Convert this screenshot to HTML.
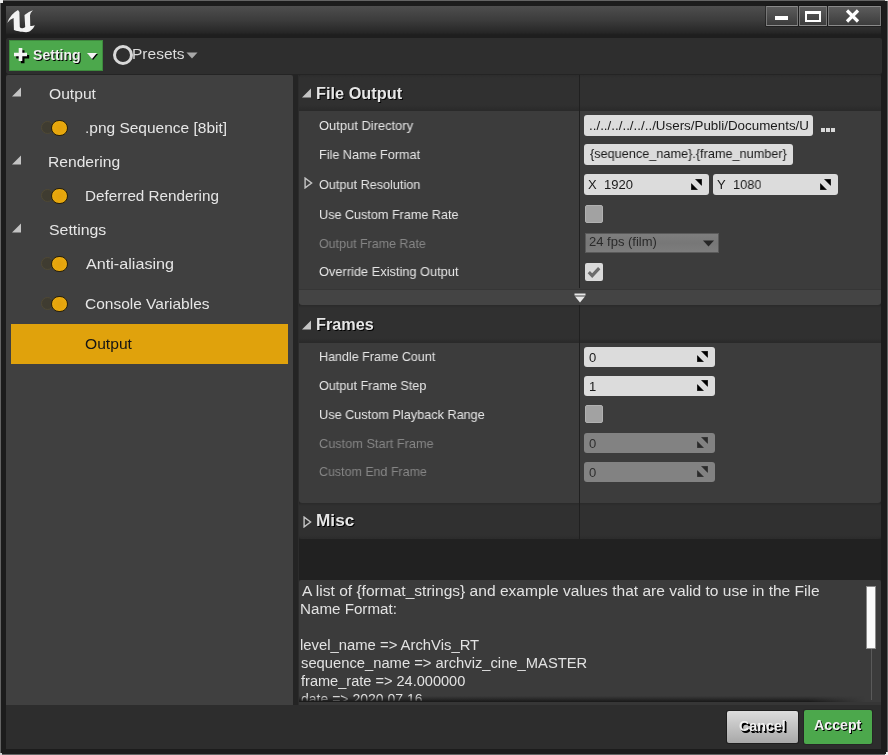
<!DOCTYPE html>
<html><head><meta charset="utf-8">
<style>
*{margin:0;padding:0;box-sizing:border-box}
html,body{width:888px;height:755px;overflow:hidden;background:#1c1c1c}
body{position:relative;font-family:"Liberation Sans",sans-serif}
.a{position:absolute}
.t{position:absolute;white-space:pre;line-height:1;will-change:transform}
</style></head><body>
<div class="a" style="left:0px;top:0px;width:888px;height:1px;background:#646464;"></div>
<div class="a" style="left:0px;top:0px;width:1px;height:755px;background:#646464;"></div>
<div class="a" style="left:887px;top:0px;width:1px;height:755px;background:#646464;"></div>
<div class="a" style="left:0px;top:754px;width:888px;height:1px;background:#646464;"></div>
<div class="a" style="left:0px;top:0px;width:3px;height:2.5px;background:#f0f0f0;"></div>
<div class="a" style="left:0px;top:0px;width:1px;height:3px;background:#f0f0f0;"></div>
<div class="a" style="left:885px;top:0px;width:3px;height:1.2px;background:#e8e8e8;"></div>
<div class="a" style="left:886px;top:752px;width:2px;height:3px;background:#f0f0f0;"></div>
<div class="a" style="left:885px;top:753.5px;width:3px;height:1.5px;background:#f0f0f0;"></div>
<div class="a" style="left:0px;top:753px;width:2px;height:2px;background:#d0d0d0;"></div>
<div class="a" style="left:6px;top:6px;width:875px;height:31.5px;background:linear-gradient(#4e4e4e 0%,#3c3c3c 44%,#272727 82%,#1e1e1e 90%,#1e1e1e 100%);"></div>
<svg class="a" style="left:4px;top:6px" width="36" height="30" viewBox="0 0 36 30"><path fill="#f2f2f2" d="M3.2 17.1 Q6 8.5 14 4.1 L15.4 6.1 L15.8 21 Q16.5 22.4 18.5 22.2 Q20.5 22 21.2 21 L20.5 8.9 Q24 6 28.9 4.3 Q26 7 26 9.6 L26.3 19.9 Q28.5 20.2 30.8 19.2 C29 23.5 25.5 26.3 22 26.2 C17 26.1 12 24.8 9.9 24 L9.6 12 Q6 13 3.2 17.1 Z"/></svg>
<div class="a" style="left:766px;top:6px;width:32px;height:20px;border:1px solid #777;border-top-color:#8a8a8a;border-bottom-color:#8a8a8a;background:linear-gradient(#5c5c5c,#3c3c3c);box-shadow:0 0 0 0.5px #111"></div>
<div class="a" style="left:775px;top:16px;width:13px;height:4px;background:#fff;"></div>
<div class="a" style="left:799px;top:6px;width:28px;height:20px;border:1px solid #777;border-top-color:#8a8a8a;border-bottom-color:#8a8a8a;background:linear-gradient(#5c5c5c,#3c3c3c);box-shadow:0 0 0 0.5px #111"></div>
<div class="a" style="left:805.3px;top:11px;width:15.7px;height:10.5px;border:2.4px solid #fff;border-top-width:3px;border-bottom-width:2px"></div>
<div class="a" style="left:828px;top:6px;width:52.5px;height:20px;border:1px solid #777;border-top-color:#8a8a8a;border-bottom-color:#8a8a8a;background:linear-gradient(#5c5c5c,#3c3c3c);box-shadow:0 0 0 0.5px #111"></div>
<svg class="a" style="left:845px;top:9px" width="15" height="14" viewBox="0 0 15 14"><path d="M2 1.5 L13 12.5 M13 1.5 L2 12.5" stroke="#fff" stroke-width="3.2"/></svg>
<div class="a" style="left:6px;top:37.5px;width:875.5px;height:36.5px;background:#2e2e2e;border-radius:2px"></div>
<div class="a" style="left:6px;top:74px;width:875px;height:1px;background:#242424;"></div>
<div class="a" style="left:9px;top:39.5px;width:94px;height:31.5px;background:#4ca84c;border:1px solid #3d8a3d"></div>
<svg class="a" style="left:13px;top:47px" width="17" height="17" viewBox="0 0 17 17"><path d="M8.5 2V15M2 8.5H15" stroke="#000" stroke-width="3.6" transform="translate(1.2,1.2)"/><path d="M7.5 1V14M1 7.5H14" stroke="#f4f4f4" stroke-width="3.6"/></svg>
<div class="t" style="left:33.20px;top:48.00px;font-size:14px;font-weight:700;color:#f0f0f0;transform:scaleX(1.0043);transform-origin:0 0;text-shadow:1px 1px 0 #000">Setting</div>
<svg class="a" style="left:86px;top:52px" width="13" height="9" viewBox="0 0 13 9"><path d="M2 2H12L7 8Z" fill="#000"/><path d="M1 1H11L6 7Z" fill="#f4f4f4"/></svg>
<div class="a" style="left:113px;top:45px;width:20px;height:20px;border-radius:50%;border:3.4px solid #d8d8d8"></div>
<div class="t" style="left:132.41px;top:46.00px;font-size:15px;font-weight:400;color:#dcdcdc;transform:scaleX(1.0347);transform-origin:0 0;">Presets</div>
<svg class="a" style="left:186px;top:52px" width="12" height="7" viewBox="0 0 12 7"><path d="M0.5 0.5H11.5L6 6.5Z" fill="#a8a8a8"/></svg>
<div class="a" style="left:6px;top:75px;width:875px;height:630px;background:#262626;"></div>
<div class="a" style="left:6px;top:75px;width:287px;height:630px;background:#404040;border-radius:2px 2px 0 0"></div>
<svg class="a" style="left:11px;top:86.8px" width="11" height="10" viewBox="0 0 11 10"><path d="M10 0.5V9.5H1Z" fill="#c4c4c4"/></svg>
<div class="t" style="left:48.72px;top:86.00px;font-size:15px;font-weight:400;color:#e6e6e6;transform:scaleX(1.0418);transform-origin:0 0;">Output</div>
<svg class="a" style="left:11px;top:154.8px" width="11" height="10" viewBox="0 0 11 10"><path d="M10 0.5V9.5H1Z" fill="#c4c4c4"/></svg>
<div class="t" style="left:48.20px;top:154.00px;font-size:15px;font-weight:400;color:#e6e6e6;transform:scaleX(1.0418);transform-origin:0 0;">Rendering</div>
<svg class="a" style="left:11px;top:222.8px" width="11" height="10" viewBox="0 0 11 10"><path d="M10 0.5V9.5H1Z" fill="#c4c4c4"/></svg>
<div class="t" style="left:48.71px;top:222.00px;font-size:15px;font-weight:400;color:#e6e6e6;transform:scaleX(1.0566);transform-origin:0 0;">Settings</div>
<div class="a" style="left:41.2px;top:121.2px;width:13.2px;height:13.2px;border-radius:50%;background:#3f3c31;border:1.6px solid #4f4934"></div>
<div class="a" style="left:51.2px;top:119.6px;width:16.6px;height:16.6px;border-radius:50%;background:radial-gradient(circle,#e4a20c 0,#e8a90e 70%,#f0b828 100%);border:1.8px solid #2a2108"></div>
<div class="t" style="left:84.91px;top:120.00px;font-size:15px;font-weight:400;color:#e6e6e6;transform:scaleX(1.0322);transform-origin:0 0;">.png Sequence [8bit]</div>
<div class="a" style="left:41.2px;top:189.2px;width:13.2px;height:13.2px;border-radius:50%;background:#3f3c31;border:1.6px solid #4f4934"></div>
<div class="a" style="left:51.2px;top:187.6px;width:16.6px;height:16.6px;border-radius:50%;background:radial-gradient(circle,#e4a20c 0,#e8a90e 70%,#f0b828 100%);border:1.8px solid #2a2108"></div>
<div class="t" style="left:84.93px;top:188.00px;font-size:15px;font-weight:400;color:#e6e6e6;transform:scaleX(1.0170);transform-origin:0 0;">Deferred Rendering</div>
<div class="a" style="left:41.2px;top:257.2px;width:13.2px;height:13.2px;border-radius:50%;background:#3f3c31;border:1.6px solid #4f4934"></div>
<div class="a" style="left:51.2px;top:255.6px;width:16.6px;height:16.6px;border-radius:50%;background:radial-gradient(circle,#e4a20c 0,#e8a90e 70%,#f0b828 100%);border:1.8px solid #2a2108"></div>
<div class="t" style="left:86.20px;top:256.00px;font-size:15px;font-weight:400;color:#e6e6e6;transform:scaleX(1.0774);transform-origin:0 0;">Anti-aliasing</div>
<div class="a" style="left:41.2px;top:297.2px;width:13.2px;height:13.2px;border-radius:50%;background:#3f3c31;border:1.6px solid #4f4934"></div>
<div class="a" style="left:51.2px;top:295.6px;width:16.6px;height:16.6px;border-radius:50%;background:radial-gradient(circle,#e4a20c 0,#e8a90e 70%,#f0b828 100%);border:1.8px solid #2a2108"></div>
<div class="t" style="left:85.43px;top:296.00px;font-size:15px;font-weight:400;color:#e6e6e6;transform:scaleX(1.0323);transform-origin:0 0;">Console Variables</div>
<div class="a" style="left:11px;top:324px;width:277px;height:40px;background:#e0a20c;"></div>
<div class="t" style="left:85.42px;top:336.00px;font-size:15px;font-weight:400;color:#151515;transform:scaleX(1.0418);transform-origin:0 0;">Output</div>
<div class="a" style="left:293px;top:75px;width:6px;height:630px;background:#242424;"></div>
<div class="a" style="left:297.5px;top:75px;width:1.5px;height:630px;background:#2c2c2c;"></div>
<div class="a" style="left:299px;top:75px;width:582px;height:35.5px;background:linear-gradient(#2c2c2c 0,#303030 3px,#303030 30px,#2a2a2a 35.5px);border-radius:2px 2px 0 0"></div>
<div class="a" style="left:299px;top:110.5px;width:582px;height:178px;background:#3c3c3c;"></div>
<div class="a" style="left:299px;top:288.5px;width:582px;height:1.5px;background:#363636;"></div>
<div class="a" style="left:299px;top:290px;width:582px;height:15px;background:#444444;border-radius:0 0 3px 3px"></div>
<div class="a" style="left:299px;top:305px;width:582px;height:37.5px;background:linear-gradient(#2a2a2a 0,#303030 3px,#303030 33px,#2a2a2a 37.5px);border-radius:2px 2px 0 0"></div>
<div class="a" style="left:299px;top:342.5px;width:582px;height:160px;background:#3c3c3c;border-radius:0 0 3px 3px"></div>
<div class="a" style="left:299px;top:502.5px;width:582px;height:36.5px;background:linear-gradient(#2a2a2a 0,#303030 3px,#303030 32px,#2b2b2b 36.5px);border-radius:2px 2px 3px 3px"></div>
<div class="a" style="left:299px;top:539px;width:582px;height:41px;background:#212121;"></div>
<div class="a" style="left:579px;top:75px;width:1.4px;height:213px;background:#202020;"></div>
<div class="a" style="left:579px;top:305px;width:1.4px;height:234px;background:#202020;"></div>
<svg class="a" style="left:301px;top:88.2px" width="11" height="10" viewBox="0 0 11 10"><path d="M10 0.5V9.5H1Z" fill="#c4c4c4"/></svg>
<div class="t" style="left:315.58px;top:86.00px;font-size:16px;font-weight:700;color:#e6e6e6;transform:scaleX(1.0198);transform-origin:0 0;text-shadow:1px 1px 0 #000">File Output</div>
<svg class="a" style="left:301px;top:319.7px" width="11" height="10" viewBox="0 0 11 10"><path d="M10 0.5V9.5H1Z" fill="#c4c4c4"/></svg>
<div class="t" style="left:315.58px;top:317.00px;font-size:16px;font-weight:700;color:#e6e6e6;transform:scaleX(1.0154);transform-origin:0 0;text-shadow:1px 1px 0 #000">Frames</div>
<svg class="a" style="left:302.8px;top:516.2px" width="9" height="12" viewBox="0 0 9 12"><path d="M1.1 1.1V10.9L7.6 6Z" fill="none" stroke="#c4c4c4" stroke-width="1.4" stroke-linejoin="miter"/></svg>
<div class="t" style="left:315.52px;top:513.00px;font-size:16px;font-weight:700;color:#e6e6e6;transform:scaleX(1.0765);transform-origin:0 0;text-shadow:1px 1px 0 #000">Misc</div>
<div class="t" style="left:319.00px;top:119.00px;font-size:13px;font-weight:400;color:#e6e6e6;transform:scaleX(0.9936);transform-origin:0 0;">Output Directory</div>
<div class="t" style="left:318.53px;top:148.00px;font-size:13px;font-weight:400;color:#e6e6e6;transform:scaleX(0.9718);transform-origin:0 0;">File Name Format</div>
<div class="t" style="left:319.01px;top:178.00px;font-size:13px;font-weight:400;color:#e6e6e6;transform:scaleX(0.9742);transform-origin:0 0;">Output Resolution</div>
<div class="t" style="left:318.53px;top:208.00px;font-size:13px;font-weight:400;color:#e6e6e6;transform:scaleX(0.9701);transform-origin:0 0;">Use Custom Frame Rate</div>
<div class="t" style="left:319.02px;top:237.00px;font-size:13px;font-weight:400;color:#868686;transform:scaleX(0.9596);transform-origin:0 0;">Output Frame Rate</div>
<div class="t" style="left:319.01px;top:265.00px;font-size:13px;font-weight:400;color:#e6e6e6;transform:scaleX(0.9851);transform-origin:0 0;">Override Existing Output</div>
<div class="t" style="left:318.54px;top:350.00px;font-size:13px;font-weight:400;color:#e6e6e6;transform:scaleX(0.9637);transform-origin:0 0;">Handle Frame Count</div>
<div class="t" style="left:319.01px;top:379.00px;font-size:13px;font-weight:400;color:#e6e6e6;transform:scaleX(0.9717);transform-origin:0 0;">Output Frame Step</div>
<div class="t" style="left:318.52px;top:408.00px;font-size:13px;font-weight:400;color:#e6e6e6;transform:scaleX(0.9765);transform-origin:0 0;">Use Custom Playback Range</div>
<div class="t" style="left:319.01px;top:437.00px;font-size:13px;font-weight:400;color:#868686;transform:scaleX(0.9793);transform-origin:0 0;">Custom Start Frame</div>
<div class="t" style="left:319.02px;top:465.00px;font-size:13px;font-weight:400;color:#868686;transform:scaleX(0.9566);transform-origin:0 0;">Custom End Frame</div>
<svg class="a" style="left:303.8px;top:176.8px" width="9" height="12" viewBox="0 0 9 12"><path d="M1.1 1.1V10.9L7.6 6Z" fill="none" stroke="#c4c4c4" stroke-width="1.4" stroke-linejoin="miter"/></svg>
<div class="a" style="left:584px;top:115px;width:229px;height:21px;background:#dcdcdc;border-radius:3px"></div>
<div class="t" style="left:589.01px;top:119.00px;font-size:13px;font-weight:400;color:#1a1a1a;transform:scaleX(1.0286);transform-origin:0 0;">../../../../../../Users/Publi/Documents/U</div>
<div class="a" style="left:821px;top:128px;width:3.5px;height:3.5px;background:#d8d8d8;"></div>
<div class="a" style="left:826px;top:128px;width:3.5px;height:3.5px;background:#d8d8d8;"></div>
<div class="a" style="left:831px;top:128px;width:3.5px;height:3.5px;background:#d8d8d8;"></div>
<div class="a" style="left:584px;top:144px;width:209px;height:21px;background:#dcdcdc;border-radius:3px"></div>
<div class="t" style="left:590.36px;top:147.00px;font-size:13px;font-weight:400;color:#1a1a1a;transform:scaleX(0.9759);transform-origin:0 0;">{sequence_name}.{frame_number}</div>
<div class="a" style="left:584px;top:174px;width:125px;height:20.5px;background:#dcdcdc;border-radius:3px"></div>
<div class="t" style="left:588.36px;top:178.00px;font-size:13px;font-weight:400;color:#1a1a1a;transform:scaleX(0.9500);transform-origin:0 0;">X</div>
<div class="t" style="left:603.61px;top:178.00px;font-size:13px;font-weight:400;color:#1a1a1a;transform:scaleX(0.9855);transform-origin:0 0;">1920</div>
<svg class="a" style="left:691px;top:179.2px" width="11" height="11" viewBox="0 0 11 11"><path d="M4.6 0.3H10.7V6.4Z M0.3 4.6V10.7H6.4Z" fill="#000" stroke="#000" stroke-width="0.6" stroke-linejoin="round"/></svg>
<div class="a" style="left:713px;top:174px;width:125px;height:20.5px;background:#dcdcdc;border-radius:3px"></div>
<div class="t" style="left:717.45px;top:178.00px;font-size:13px;font-weight:400;color:#1a1a1a;">Y</div>
<div class="t" style="left:732.82px;top:178.00px;font-size:13px;font-weight:400;color:#1a1a1a;transform:scaleX(0.9818);transform-origin:0 0;">1080</div>
<svg class="a" style="left:820px;top:179.2px" width="11" height="11" viewBox="0 0 11 11"><path d="M4.6 0.3H10.7V6.4Z M0.3 4.6V10.7H6.4Z" fill="#000" stroke="#000" stroke-width="0.6" stroke-linejoin="round"/></svg>
<div class="a" style="left:585px;top:205px;width:18px;height:18px;background:#a2a2a2;border-radius:2px;border:1px solid #b0b0b0"></div>
<div class="a" style="left:585px;top:232.5px;width:134px;height:20.5px;background:linear-gradient(#7e7e7e,#777 50%,#7d7d7d);border:1px solid #5a5a5a"></div>
<div class="t" style="left:588.90px;top:235.00px;font-size:13px;font-weight:400;color:#2a2a2a;transform:scaleX(0.9933);transform-origin:0 0;">24 fps (film)</div>
<svg class="a" style="left:703px;top:240px" width="11" height="7" viewBox="0 0 11 7"><path d="M0 0.5H11L5.5 6.5Z" fill="#262626"/></svg>
<div class="a" style="left:585px;top:263px;width:18px;height:18px;background:#dadada;border-radius:2px"></div>
<svg class="a" style="left:585px;top:263px" width="18" height="18" viewBox="0 0 18 18"><path d="M3.8 9.2L7.2 12.6L14.2 5.2" fill="none" stroke="#6c6c6c" stroke-width="3.2"/></svg>
<svg class="a" style="left:574px;top:292.5px" width="12" height="10" viewBox="0 0 12 10"><path d="M0.5 0.5H11.5V2.5H0.5Z" fill="#e8e8e8"/><path d="M1 3.5H11L6 9.5Z" fill="#e8e8e8"/></svg>
<div class="a" style="left:584px;top:347px;width:131px;height:20px;background:#dcdcdc;border-radius:3px"></div>
<div class="t" style="left:589.00px;top:351.00px;font-size:13px;font-weight:400;color:#1a1a1a;">0</div>
<svg class="a" style="left:697px;top:351.2px" width="11" height="11" viewBox="0 0 11 11"><path d="M4.6 0.3H10.7V6.4Z M0.3 4.6V10.7H6.4Z" fill="#000" stroke="#000" stroke-width="0.6" stroke-linejoin="round"/></svg>
<div class="a" style="left:584px;top:376px;width:131px;height:20px;background:#dcdcdc;border-radius:3px"></div>
<div class="t" style="left:588.50px;top:380.00px;font-size:13px;font-weight:400;color:#1a1a1a;">1</div>
<svg class="a" style="left:697px;top:380.2px" width="11" height="11" viewBox="0 0 11 11"><path d="M4.6 0.3H10.7V6.4Z M0.3 4.6V10.7H6.4Z" fill="#000" stroke="#000" stroke-width="0.6" stroke-linejoin="round"/></svg>
<div class="a" style="left:584px;top:433px;width:131px;height:20px;background:#828282;border-radius:3px"></div>
<div class="t" style="left:589.00px;top:437.00px;font-size:13px;font-weight:400;color:#2e2e2e;">0</div>
<svg class="a" style="left:697px;top:437.2px" width="11" height="11" viewBox="0 0 11 11"><path d="M4.6 0.3H10.7V6.4Z M0.3 4.6V10.7H6.4Z" fill="#2a2a2a" stroke="#2a2a2a" stroke-width="0.6" stroke-linejoin="round"/></svg>
<div class="a" style="left:584px;top:462px;width:131px;height:20px;background:#828282;border-radius:3px"></div>
<div class="t" style="left:589.00px;top:466.00px;font-size:13px;font-weight:400;color:#2e2e2e;">0</div>
<svg class="a" style="left:697px;top:466.2px" width="11" height="11" viewBox="0 0 11 11"><path d="M4.6 0.3H10.7V6.4Z M0.3 4.6V10.7H6.4Z" fill="#2a2a2a" stroke="#2a2a2a" stroke-width="0.6" stroke-linejoin="round"/></svg>
<div class="a" style="left:585px;top:405px;width:18px;height:18px;background:#a2a2a2;border-radius:2px;border:1px solid #b0b0b0"></div>
<div class="a" style="left:299px;top:580px;width:582px;height:124px;background:#3b3b3b;border-radius:2px 2px 0 0"></div>
<div class="a" style="left:299px;top:580px;width:582px;height:121px;overflow:hidden">
<div class="t" style="left:2.50px;top:4.00px;font-size:14px;font-weight:400;color:#e2e2e2;transform:scaleX(1.1104);transform-origin:0 0;">A list of {format_strings} and example values that are valid to use in the File</div>
<div class="t" style="left:1.42px;top:22.00px;font-size:14px;font-weight:400;color:#e2e2e2;transform:scaleX(1.0831);transform-origin:0 0;">Name Format:</div>
<div class="t" style="left:1.44px;top:58.00px;font-size:14px;font-weight:400;color:#e2e2e2;transform:scaleX(1.0593);transform-origin:0 0;">level_name => ArchVis_RT</div>
<div class="t" style="left:1.97px;top:76.00px;font-size:14px;font-weight:400;color:#e2e2e2;transform:scaleX(1.0540);transform-origin:0 0;">sequence_name => archviz_cine_MASTER</div>
<div class="t" style="left:2.24px;top:94.00px;font-size:14px;font-weight:400;color:#e2e2e2;transform:scaleX(1.0397);transform-origin:0 0;">frame_rate => 24.000000</div>
<div class="t" style="left:2.00px;top:112.00px;font-size:14px;font-weight:400;color:#e2e2e2;">date => 2020.07.16</div>
</div>
<div class="a" style="left:299px;top:695.5px;width:566px;height:6.5px;background:linear-gradient(rgba(22,22,22,0),rgba(22,22,22,.55) 60%,rgba(22,22,22,.95));-webkit-mask-image:linear-gradient(90deg,#000 90%,transparent);mask-image:linear-gradient(90deg,#000 90%,transparent)"></div>
<div class="a" style="left:299px;top:702px;width:582px;height:2.5px;background:#363636;"></div>
<div class="a" style="left:871px;top:648px;width:1px;height:52px;background:#5a5a5a;"></div>
<div class="a" style="left:866px;top:586px;width:9.5px;height:62.5px;background:#fafafa;border:1px solid #8a8a8a"></div>
<div class="a" style="left:6px;top:705px;width:875px;height:44px;background:#2d2d2d;"></div>
<div class="a" style="left:727px;top:711px;width:71px;height:32px;background:linear-gradient(#dcdcdc,#a8a8a8);border-radius:2px;box-shadow:0 0 0 1px #1e1e1e"></div>
<div class="t" style="left:739.39px;top:719.00px;font-size:14px;font-weight:700;color:#f2f2f2;transform:scaleX(1.0202);transform-origin:0 0;text-shadow:1px 1px 0 #000,1.5px 1.5px 0.5px #000">Cancel</div>
<div class="a" style="left:804px;top:710px;width:68px;height:34px;background:#4ca84c;border-radius:2px;box-shadow:0 0 0 1px #262626"></div>
<div class="t" style="left:814.35px;top:718.00px;font-size:14px;font-weight:700;color:#f2f2f2;transform:scaleX(1.0141);transform-origin:0 0;text-shadow:1px 1px 0 #000">Accept</div>
</body></html>
